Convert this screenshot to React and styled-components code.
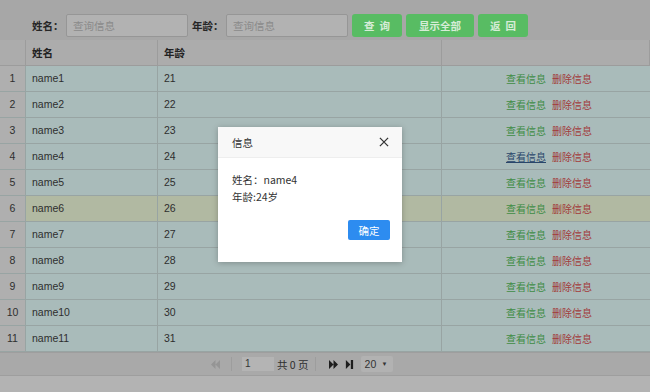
import styled, { createGlobalStyle } from 'styled-components';

const GlobalStyle = createGlobalStyle`
  html, body {
    margin: 0;
    padding: 0;
    background: #b4b4b4;
    font-family: "Liberation Sans", "Noto Sans CJK SC", sans-serif;
    font-size: 10px;
    color: #2b2b2b;
  }
`;

const Page = styled.div`
  position: relative;
  width: 650px;
  height: 392px;
  overflow: hidden;
  display: flex;
  flex-direction: column;
`;

const Toolbar = styled.div`
  height: 40px;
  box-sizing: border-box;
  padding: 14px 0 0 32px;
  background: #a7a7a7;
  display: flex;
  align-items: flex-start;
`;

const Label = styled.label`
  width: 34px;
  font-weight: bold;
  font-family: "Noto Sans CJK SC", sans-serif;
  font-size: 10.5px;
  line-height: 23px;
  color: #262626;
`;

const SearchInput = styled.input`
  width: 122px;
  height: 23px;
  box-sizing: border-box;
  border: 1px solid #969696;
  border-radius: 2px;
  background: #b2b2b2;
  padding: 0 6px;
  margin-right: 4px;
  font-family: "Noto Sans CJK SC", sans-serif;
  font-size: 10.5px;
  &::placeholder { color: #8a8a8a; }
`;

const GreenButton = styled.button`
  width: ${(p) => p.$w}px;
  height: 23px;
  margin-right: 4px;
  border: none;
  border-radius: 3px;
  background: #58bc63;
  color: #d6ecd7;
  font-family: "Noto Sans CJK SC", sans-serif;
  font-weight: bold;
  font-size: 10.5px;
  letter-spacing: ${(p) => (p.$spaced ? '5px' : '0')};
  text-indent: ${(p) => (p.$spaced ? '5px' : '0')};
  padding: 0;
`;

const Grid = styled.div`
  display: grid;
  grid-template-columns: 26px 132px 284px 208px;
`;

const HeadCell = styled.div`
  height: 26px;
  box-sizing: border-box;
  background: #acacac;
  border-right: 1px solid #9c9c9c;
  border-bottom: 1px solid #9c9c9c;
  padding-left: 6px;
  font-weight: bold;
  font-family: "Noto Sans CJK SC", sans-serif;
  font-size: 10.5px;
  line-height: 25px;
  color: #222;
  &:last-child { border-right: none; }
`;

const Cell = styled.div`
  height: 26px;
  box-sizing: border-box;
  background: ${(p) => (p.$num ? '#afafaf' : p.$hl ? '#b1b9a2' : '#a9bbba')};
  border-right: 1px solid #98a4a3;
  border-bottom: 1px solid #98a4a3;
  padding-left: ${(p) => (p.$num ? 0 : 6)}px;
  text-align: ${(p) => (p.$num || p.$center ? 'center' : 'left')};
  line-height: 25px;
  font-size: 10.5px;
  color: #2e2e2e;
  &:nth-child(4n) { border-right: none; }
`;

const Link = styled.a`
  font-family: "Noto Sans CJK SC", sans-serif;
  font-size: 10px;
  color: ${(p) => p.$color};
  text-decoration: ${(p) => (p.$under ? 'underline' : 'none')};
  margin: 0 3px;
  cursor: pointer;
`;

const Pager = styled.div`
  height: 22px;
  background: #a9a9a9;
  border-top: 1px solid #9e9e9e;
  border-bottom: 1px solid #9e9e9e;
  display: flex;
  align-items: center;
  padding-left: 205px;
`;

const PagerIcon = styled.span`
  display: inline-flex;
  width: 14px;
  justify-content: center;
  margin: 0 ${(p) => p.$gap ?? 3}px;
`;

const Sep = styled.span`
  width: 1px;
  height: 14px;
  background: #9d9d9d;
  margin: 0 10px 0 6px;
`;

const PageInput = styled.span`
  width: 32px;
  height: 14px;
  background: #b4b4b4;
  line-height: 14px;
  padding-left: 3px;
  box-sizing: border-box;
  font-size: 10px;
  color: #333;
  margin-right: 3px;
`;

const PageText = styled.span`
  font-family: "Noto Sans CJK SC", sans-serif;
  font-size: 10.5px;
  color: #2e2e2e;
`;

const SizeSelect = styled.span`
  width: 32px;
  height: 16px;
  margin-left: 3px;
  background: #b2b2b2;
  border-radius: 2px;
  display: flex;
  align-items: center;
  justify-content: space-between;
  padding: 0 5px 0 4px;
  box-sizing: border-box;
  font-size: 10.5px;
  color: #333;
`;

const Caret = styled.span`
  font-size: 6px;
`;

const Filler = styled.div`
  flex: 1;
  background: #b3b3b3;
`;

const Dialog = styled.div`
  position: absolute;
  left: 218px;
  top: 127px;
  width: 184px;
  height: 135px;
  background: #fff;
  box-shadow: 0 1px 6px rgba(0, 0, 0, 0.25);
  display: flex;
  flex-direction: column;
  font-family: "Noto Sans CJK SC", sans-serif;
  font-size: 10.5px;
`;

const DialogHead = styled.div`
  height: 30px;
  background: #f8f8f8;
  border-bottom: 1px solid #eee;
  display: flex;
  align-items: center;
  justify-content: space-between;
  padding: 0 13px 0 14px;
  color: #333;
`;

const DialogBody = styled.div`
  padding: 13px 14px 0;
  line-height: 17px;
  color: #333;
  flex: 1;
`;

const DialogFoot = styled.div`
  display: flex;
  justify-content: flex-end;
  padding: 0 12px 22px;
`;

const OkButton = styled.button`
  width: 42px;
  height: 20px;
  border: none;
  border-radius: 2px;
  background: #2d8cf0;
  color: #fff;
  font-family: "Noto Sans CJK SC", sans-serif;
  font-size: 10.5px;
  padding: 0;
`;

const rows = Array.from({ length: 11 }, (_, i) => ({ name: `name${i + 1}`, age: 21 + i }));

const ArrowLeft = ({ color }) => (
  <svg width="11" height="9" viewBox="0 0 12 10">
    <path d="M6 0L1 5l5 5zM11 0L6 5l5 5z" fill={color} />
  </svg>
);

const ArrowRight = () => (
  <svg width="11" height="9" viewBox="0 0 12 10">
    <path d="M1 0l5 5-5 5zM6 0l5 5-5 5z" fill="#1e1e1e" />
  </svg>
);

const ArrowLast = () => (
  <svg width="9" height="9" viewBox="0 0 10 10">
    <path d="M1 0l5 5-5 5z" fill="#1e1e1e" />
    <rect x="6.5" y="0" width="2.5" height="10" fill="#1e1e1e" />
  </svg>
);

export default function App() {
  return (
    <Page>
      <GlobalStyle />
      <Toolbar>
        <Label>姓名：</Label>
        <SearchInput placeholder="查询信息" />
        <Label>年龄：</Label>
        <SearchInput placeholder="查询信息" />
        <GreenButton $w={50} $spaced>查询</GreenButton>
        <GreenButton $w={68}>显示全部</GreenButton>
        <GreenButton $w={50} $spaced>返回</GreenButton>
      </Toolbar>
      <Grid>
        <HeadCell />
        <HeadCell>姓名</HeadCell>
        <HeadCell>年龄</HeadCell>
        <HeadCell />
        {rows.map((r, i) => (
          <Row key={r.name} row={r} index={i} />
        ))}
      </Grid>
      <Pager>
        <PagerIcon><ArrowLeft color="#959595" /></PagerIcon>
        <Sep />
        <PageInput>1</PageInput>
        <PageText>共 0 页</PageText>
        <Sep />
        <PagerIcon $gap={1}><ArrowRight /></PagerIcon>
        <PagerIcon $gap={1}><ArrowLast /></PagerIcon>
        <SizeSelect>20<Caret>▼</Caret></SizeSelect>
      </Pager>
      <Filler />
      <Dialog>
        <DialogHead>
          <span>信息</span>
          <svg width="10" height="10" viewBox="0 0 11 11">
            <path d="M1 1l9 9M10 1l-9 9" stroke="#333" strokeWidth="1.4" />
          </svg>
        </DialogHead>
        <DialogBody>
          <div>姓名：name4</div>
          <div>年龄:24岁</div>
        </DialogBody>
        <DialogFoot>
          <OkButton>确定</OkButton>
        </DialogFoot>
      </Dialog>
    </Page>
  );
}

function Row({ row, index }) {
  const hl = index === 5;
  return (
    <>
      <Cell $num>{index + 1}</Cell>
      <Cell $hl={hl}>{row.name}</Cell>
      <Cell $hl={hl}>{row.age}</Cell>
      <Cell $hl={hl} $center>
        <Link $color={index === 3 ? '#29466a' : '#3f8c45'} $under={index === 3}>查看信息</Link>
        <Link $color="#a23a3a">删除信息</Link>
      </Cell>
    </>
  );
}
